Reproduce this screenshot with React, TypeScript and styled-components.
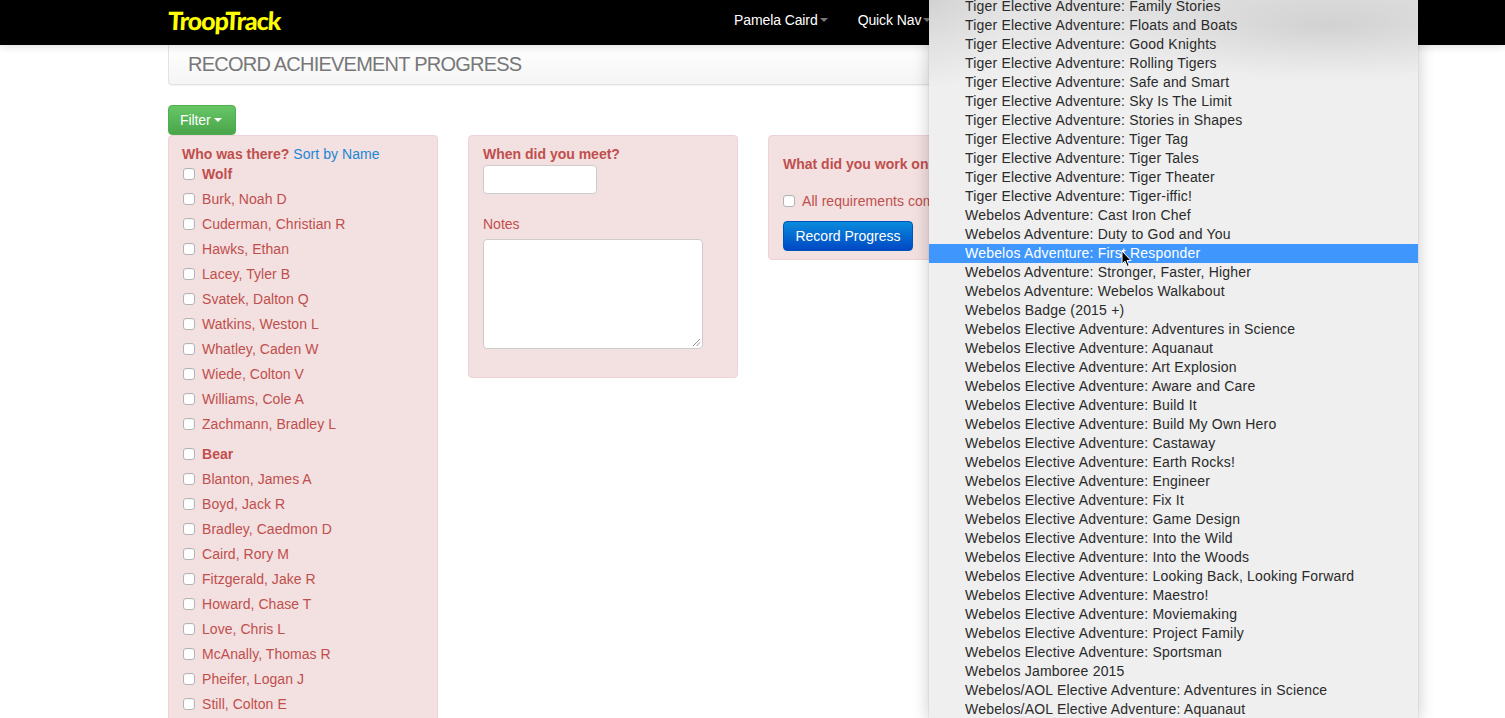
import React from "react";
import styled, { createGlobalStyle, css } from "styled-components";

const Global = createGlobalStyle`
  html, body { margin: 0; padding: 0; height: 718px; overflow: hidden; background: #fff; }
  body { font-family: "Liberation Sans", Arial, sans-serif; font-size: 14px; line-height: 20px; }
  * { box-sizing: border-box; }
`;

const Page = styled.div`
  position: relative;
  width: 1505px;
  height: 718px;
  overflow: hidden;
`;

const Navbar = styled.header`
  height: 45px;
  background: #000;
  box-shadow: 0 2px 8px rgba(0, 0, 0, 0.12);
  padding: 0 0 5px 168px;
  display: flex;
  align-items: center;
  position: relative;
  z-index: 1;
`;

const Logo = styled.a`
  width: 113px;
  color: #ffff00;
  font-family: Lato, "DejaVu Sans", sans-serif;
  font-weight: 900;
  font-size: 25px;
  line-height: 30px;
  letter-spacing: -1px;
  white-space: nowrap;
  transform: skewX(-3deg);
`;

const NavItem = styled.a<{ $first?: boolean }>`
  color: #fff;
  font-size: 14px;
  letter-spacing: -0.1px;
  display: flex;
  align-items: center;
  gap: 2px;
  white-space: nowrap;
  margin-left: ${(p) => (p.$first ? "453px" : "30px")};
`;

const Caret = styled.span<{ $color: string }>`
  display: inline-block;
  width: 0;
  height: 0;
  border-left: 4px solid transparent;
  border-right: 4px solid transparent;
  border-top: 4px solid ${(p) => p.$color};
`;

const Container = styled.main`
  width: 1170px;
  margin-left: 168px;
`;

const TitleWell = styled.div`
  height: 40px;
  padding: 0 19px 2px;
  display: flex;
  align-items: center;
  border: 1px solid #e3e3e3;
  border-top: none;
  border-radius: 0 0 4px 4px;
  background: linear-gradient(#ffffff, #f5f5f5);
  box-shadow: 0 1px 1px rgba(0, 0, 0, 0.05);
`;

const Title = styled.h1`
  margin: 0;
  font-size: 20px;
  font-weight: 400;
  letter-spacing: -0.77px;
  color: #777;
`;

const FilterButton = styled.button`
  display: flex;
  align-items: center;
  gap: 3px;
  margin-top: 20px;
  width: 68px;
  height: 30px;
  padding: 0 0 0 11px;
  font: inherit;
  letter-spacing: -0.1px;
  color: #fff;
  border: 1px solid #4cae4c;
  border-radius: 4px;
  background: linear-gradient(#66c666, #4aa54a);
`;

const Columns = styled.div`
  display: grid;
  grid-template-columns: repeat(3, 270px);
  column-gap: 30px;
  align-items: start;
`;

const Panel = styled.section<{ $kind: "who" | "when" | "what" }>`
  background: #f3e0e0;
  border: 1px solid #eed3d6;
  border-radius: 4px;
  color: #bf4f4d;
  ${(p) =>
    p.$kind === "who" &&
    css`
      height: 700px;
      padding: 8px 13px 0;
    `}
  ${(p) =>
    p.$kind === "when" &&
    css`
      height: 243px;
      padding: 8px 14px 0;
    `}
  ${(p) =>
    p.$kind === "what" &&
    css`
      height: 125px;
      padding: 18px 14px 0;
    `}
`;

const Heading = styled.strong`
  font-weight: 700;
`;

const SortLink = styled.a`
  color: #1a87d6;
  margin-left: 4px;
  letter-spacing: 0.05px;
`;

const HeadLine = styled.div`
  height: 20px;
  white-space: nowrap;
`;

const Group = styled.div<{ $first?: boolean }>`
  margin-top: ${(p) => (p.$first ? "0" : "8px")};
`;

const CheckRow = styled.label<{ $head?: boolean }>`
  display: flex;
  align-items: center;
  height: 25px;
  font-weight: ${(p) => (p.$head ? 700 : 400)};
  letter-spacing: 0.05px;
  white-space: nowrap;
`;

const HeadRow = styled(CheckRow)`
  height: 20px;
  margin-bottom: 2px;
`;

const Check = styled.span`
  flex: none;
  width: 12px;
  height: 12px;
  margin: 0 7px 0 1px;
  background: #fff;
  border: 1px solid #b4b4b4;
  border-radius: 3px;
  box-shadow: inset 0 1px 1px rgba(0, 0, 0, 0.04);
`;

const DateInput = styled.div`
  width: 114px;
  height: 29px;
  margin-top: 1px;
  background: #fff;
  border: 1px solid #ccc;
  border-radius: 4px;
`;

const NotesLabel = styled.div`
  margin-top: 20px;
  height: 20px;
`;

const NotesArea = styled.div`
  position: relative;
  width: 220px;
  height: 110px;
  margin-top: 5px;
  background: #fff;
  border: 1px solid #ccc;
  border-radius: 4px;
`;

const Grip = styled.svg`
  position: absolute;
  right: 1px;
  bottom: 1px;
`;

const AllReqRow = styled(CheckRow)`
  margin: 14px 0 0 -1px;
`;

const RecordButton = styled.button`
  display: block;
  width: 130px;
  height: 30px;
  margin-top: 8px;
  padding: 0;
  font: inherit;
  color: #fff;
  border: 1px solid #0055bb;
  border-radius: 4px;
  background: linear-gradient(#0a8bdc, #0048c4);
`;

const Menu = styled.aside`
  position: absolute;
  left: 929px;
  top: 0;
  width: 489px;
  height: 718px;
  overflow: hidden;
  z-index: 5;
  background:
    radial-gradient(ellipse 230px 52px at 400px 26px, rgba(150, 150, 150, 0.26), rgba(150, 150, 150, 0.1) 55%, rgba(150, 150, 150, 0)),
    radial-gradient(ellipse 80px 90px at 0 0, rgba(0, 0, 0, 0.07), rgba(0, 0, 0, 0)),
    linear-gradient(#e2e2e2 0, #e9e9e9 40px, #efefef 85px);
  box-shadow: 0 2px 16px rgba(0, 0, 0, 0.22), 0 0 0 1px rgba(0, 0, 0, 0.04);
`;

const MenuList = styled.ul`
  list-style: none;
  margin: -3px 0 0;
  padding: 0;
`;

const MenuRow = styled.li<{ $active?: boolean }>`
  height: 19px;
  line-height: 19px;
  padding-left: 36px;
  font-size: 14px;
  letter-spacing: 0.2px;
  white-space: nowrap;
  color: ${(p) => (p.$active ? "#fff" : "#2a2a2a")};
  background: ${(p) => (p.$active ? "#3f97fd" : "transparent")};
`;

const Cursor = styled.svg`
  position: absolute;
  left: 1121px;
  top: 250px;
  z-index: 6;
`;

const wolf = ["Burk, Noah D", "Cuderman, Christian R", "Hawks, Ethan", "Lacey, Tyler B", "Svatek, Dalton Q", "Watkins, Weston L", "Whatley, Caden W", "Wiede, Colton V", "Williams, Cole A", "Zachmann, Bradley L"];
const bear = ["Blanton, James A", "Boyd, Jack R", "Bradley, Caedmon D", "Caird, Rory M", "Fitzgerald, Jake R", "Howard, Chase T", "Love, Chris L", "McAnally, Thomas R", "Pheifer, Logan J", "Still, Colton E"];

const tiger = ["Family Stories", "Floats and Boats", "Good Knights", "Rolling Tigers", "Safe and Smart", "Sky Is The Limit", "Stories in Shapes", "Tiger Tag", "Tiger Tales", "Tiger Theater", "Tiger-iffic!"].map((s) => `Tiger Elective Adventure: ${s}`);
const webAdv = ["Cast Iron Chef", "Duty to God and You", "First Responder", "Stronger, Faster, Higher", "Webelos Walkabout"].map((s) => `Webelos Adventure: ${s}`);
const webElec = ["Adventures in Science", "Aquanaut", "Art Explosion", "Aware and Care", "Build It", "Build My Own Hero", "Castaway", "Earth Rocks!", "Engineer", "Fix It", "Game Design", "Into the Wild", "Into the Woods", "Looking Back, Looking Forward", "Maestro!", "Moviemaking", "Project Family", "Sportsman"].map((s) => `Webelos Elective Adventure: ${s}`);
const menuItems = [...tiger, ...webAdv, "Webelos Badge (2015 +)", ...webElec, "Webelos Jamboree 2015", "Webelos/AOL Elective Adventure: Adventures in Science", "Webelos/AOL Elective Adventure: Aquanaut"];

const Scouts = ({ name, list, first }: { name: string; list: string[]; first?: boolean }) => (
  <Group $first={first}>
    <HeadRow $head>
      <Check />
      {name}
    </HeadRow>
    {list.map((n) => (
      <CheckRow key={n}>
        <Check />
        {n}
      </CheckRow>
    ))}
  </Group>
);

export default function App() {
  return (
    <Page>
      <Global />
      <Navbar>
        <Logo>TroopTrack</Logo>
        <NavItem $first>
          Pamela Caird
          <Caret $color="#777" />
        </NavItem>
        <NavItem>
          Quick Nav
          <Caret $color="#777" />
        </NavItem>
      </Navbar>
      <Container>
        <TitleWell>
          <Title>RECORD ACHIEVEMENT PROGRESS</Title>
        </TitleWell>
        <FilterButton>
          Filter
          <Caret $color="#fff" />
        </FilterButton>
        <Columns>
          <Panel $kind="who">
            <HeadLine>
              <Heading>Who was there?</Heading>
              <SortLink>Sort by Name</SortLink>
            </HeadLine>
            <Scouts name="Wolf" list={wolf} first />
            <Scouts name="Bear" list={bear} />
          </Panel>
          <Panel $kind="when">
            <HeadLine>
              <Heading>When did you meet?</Heading>
            </HeadLine>
            <DateInput />
            <NotesLabel>Notes</NotesLabel>
            <NotesArea>
              <Grip width="9" height="9" viewBox="0 0 9 9">
                <path d="M1 8 L8 1 M4.5 8 L8 4.5" stroke="#777" strokeWidth="0.8" />
              </Grip>
            </NotesArea>
          </Panel>
          <Panel $kind="what">
            <HeadLine>
              <Heading>What did you work on?</Heading>
            </HeadLine>
            <AllReqRow>
              <Check />
              All requirements completed
            </AllReqRow>
            <RecordButton>Record Progress</RecordButton>
          </Panel>
        </Columns>
      </Container>
      <Menu>
        <MenuList>
          {menuItems.map((m) => (
            <MenuRow key={m} $active={m === "Webelos Adventure: First Responder"}>
              {m}
            </MenuRow>
          ))}
        </MenuList>
      </Menu>
      <Cursor width="12" height="18" viewBox="0 0 12 18">
        <path d="M1 1 L1 14 L4 11.2 L6.2 16.4 L8.2 15.5 L6 10.5 L10 10.5 Z" fill="#000" stroke="#fff" strokeWidth="1" />
      </Cursor>
    </Page>
  );
}
